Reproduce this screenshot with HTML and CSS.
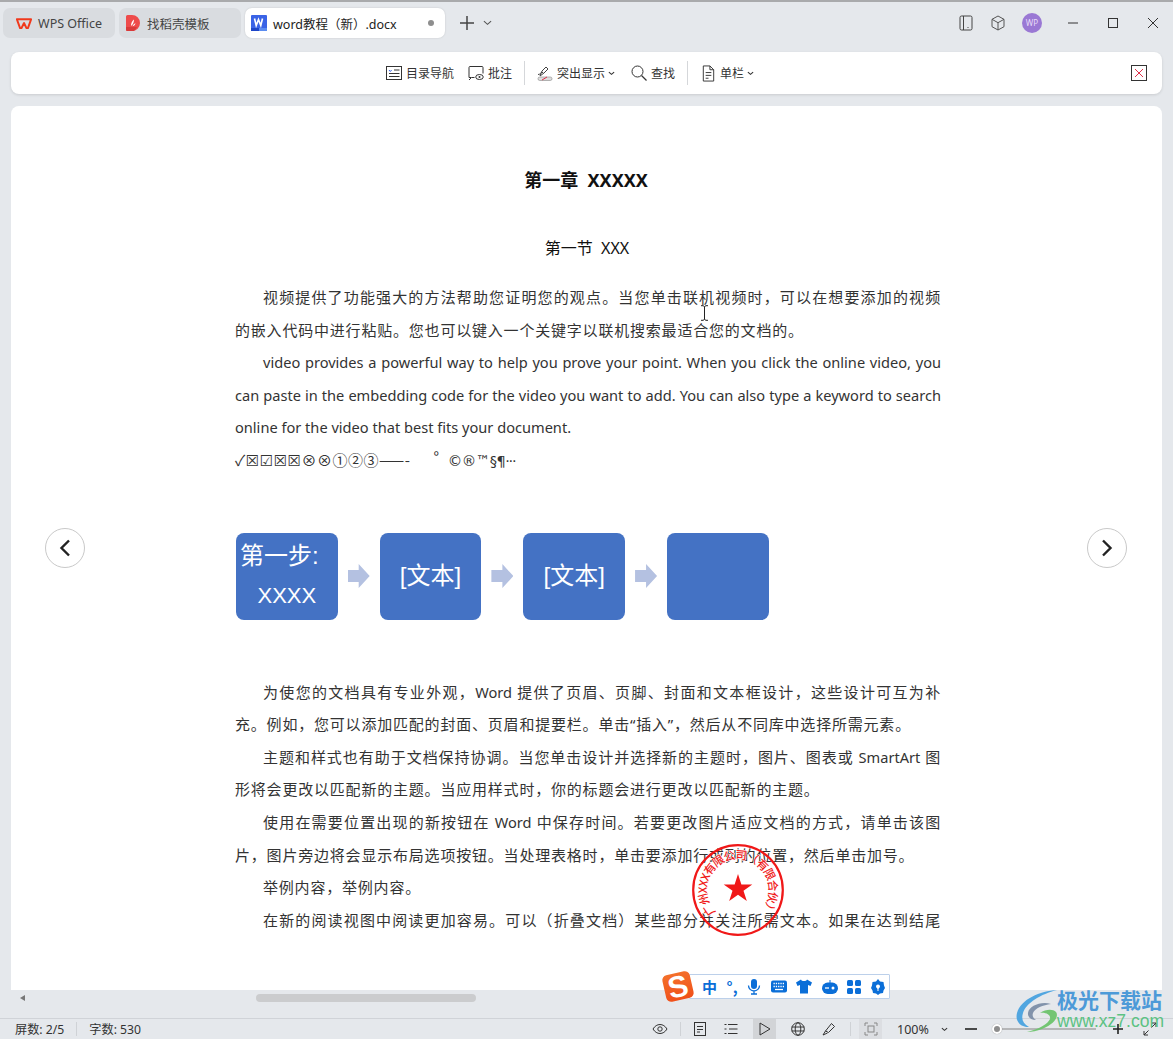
FILE: index.html
```html
<!DOCTYPE html>
<html lang="zh-CN">
<head>
    <meta charset="UTF-8">
    <meta name="viewport" content="width=device-width, initial-scale=1.0">
    <title>word教程（新）.docx</title>
    <link rel="stylesheet" href="styles.css">
</head>
<body>
<div class="app">
    <!-- tabs -->
    <header class="titlebar">
        <div class="tab">
            <svg class="tab-icon" viewBox="0 0 18 14" width="16" height="13"><path d="M1 2.200h16l-3.600 10h-1.600L9 6.500l-2.800 5.700H4.600z" fill="none" stroke="#f0391c" stroke-width="2.200" stroke-linejoin="round"/></svg>
            <span>WPS Office</span>
        </div>
        <div class="tab tab-docer">
            <svg class="tab-icon" viewBox="0 0 14 16" width="14" height="16"><path d="M0 1.500A1.500 1.500 0 0 1 1.500 0H6a8 8 0 0 1 0 16H1.500A1.500 1.500 0 0 1 0 14.500z" fill="#ee4b4b"/><path d="M0 12h11l-3 4H1.500A1.500 1.500 0 0 1 0 14.500z" fill="#d93a3a"/><path d="M5 11c0-3 1-5 3-6.500 0 2-.5 4.500-3 6.500zm1.500.3c.5-1.500 1.500-2.500 3-3-.3 1.500-1.300 2.600-3 3z" fill="#fff"/></svg>
            <span>找稻壳模板</span>
        </div>
        <div class="tab tab-active">
            <svg class="tab-icon" viewBox="0 0 16 16" width="16" height="16"><rect width="16" height="16" rx="1" fill="#3a63e6"/><rect y="13" width="16" height="3" fill="#5b8cf0"/><rect y="13" width="8" height="3" fill="#1d45c8"/><path d="M3.500 3.500l1.700 7 2.300-6 2.300 6 1.700-7" fill="none" stroke="#fff" stroke-width="1.600"/></svg>
            <span class="tab-name">word教程（新）.docx</span>
            <i class="tab-dot"></i>
        </div>
        <div class="tab-add">
            <svg viewBox="0 0 16 16" width="16" height="16"><path d="M8 1v14M1 8h14" stroke="#444" stroke-width="1.500"/></svg>
            <svg viewBox="0 0 10 6" width="9" height="6"><path d="M1 1l4 3.500L9 1" fill="none" stroke="#555" stroke-width="1.200"/></svg>
        </div>
        <div class="win-btns">
            <svg viewBox="0 0 16 16" width="16" height="16"><rect x="2" y="1" width="12" height="14" rx="1.500" fill="none" stroke="#444"/><path d="M5.500 1v14" stroke="#444"/><path d="M9.500 12.500h1" stroke="#444"/></svg>
            <svg class="win-cube" viewBox="0 0 16 16" width="16" height="16"><path d="M8 1l6 3.300v7.400L8 15l-6-3.300V4.300zM2 4.300l6 3.400 6-3.400M8 7.700V15" fill="none" stroke="#555"/></svg>
            <span class="avatar">WP</span>
            <svg class="win-min" viewBox="0 0 12 12" width="12" height="12"><path d="M1 6h10" stroke="#333"/></svg>
            <svg class="win-max" viewBox="0 0 12 12" width="12" height="12"><rect x="1.500" y="1.500" width="9" height="9" fill="none" stroke="#333"/></svg>
            <svg class="win-close" viewBox="0 0 12 12" width="12" height="12"><path d="M1 1l10 10M11 1L1 11" stroke="#333"/></svg>
        </div>
    </header>

    <!-- reading toolbar -->
    <nav class="toolbar">
        <div class="tool">
            <svg viewBox="0 0 16 14" width="16" height="14"><rect x=".5" y=".5" width="15" height="13" fill="none" stroke="#333"/><path d="M3 4l1.300 1.500L5.600 4" fill="none" stroke="#3a63e6"/><path d="M8 4h5.500M3 7.500h10.500M3 10.500h10.500" stroke="#333"/></svg>
            <span>目录导航</span>
        </div>
        <div class="tool tool-note">
            <svg viewBox="0 0 16 16" width="16" height="16"><path d="M3 12.500H1V2.500a1 1 0 0 1 1-1h12a1 1 0 0 1 1 1v6" fill="none" stroke="#333"/><path d="M1 15l2.500-2.500h3" fill="none" stroke="#333"/><ellipse cx="11.500" cy="12" rx="3.800" ry="2.500" fill="none" stroke="#333"/><circle cx="11.500" cy="12" r="1" fill="#333"/></svg>
            <span>批注</span>
        </div>
        <i class="tool-sep"></i>
        <div class="tool">
            <svg viewBox="0 0 16 16" width="16" height="16"><path d="M3 11l2-5 4-4 2 2-4 4zM1 9.500c2 .5 3-3 5-2" fill="none" stroke="#444"/><rect x="1" y="12" width="14" height="3.500" rx="1.700" fill="#ddd" stroke="#888" stroke-width=".6"/><path d="M5 15l5-3" stroke="#e0304a"/></svg>
            <span>突出显示</span>
            <svg class="caret" viewBox="0 0 8 5" width="7" height="5"><path d="M1 1l3 2.500L7 1" fill="none" stroke="#333" stroke-width="1.300"/></svg>
        </div>
        <div class="tool tool-find">
            <svg viewBox="0 0 16 16" width="16" height="16"><circle cx="6.500" cy="6.500" r="5.500" fill="none" stroke="#333"/><path d="M10.500 10.500L15.500 15.500" stroke="#333" stroke-width="1.200"/></svg>
            <span>查找</span>
        </div>
        <i class="tool-sep"></i>
        <div class="tool tool-cols">
            <svg viewBox="0 0 14 18" width="15" height="17"><path d="M1.500 1h7l4 4v12h-11z" fill="none" stroke="#333"/><path d="M8.500 1v4h4M4 8h6M4 11h6M4 14h3" fill="none" stroke="#333"/></svg>
            <span>单栏</span>
            <svg class="caret" viewBox="0 0 8 5" width="7" height="5"><path d="M1 1l3 2.500L7 1" fill="none" stroke="#333" stroke-width="1.300"/></svg>
        </div>
        <svg class="tool-close" viewBox="0 0 16 16" width="16" height="16"><rect x=".5" y=".5" width="15" height="15" fill="none" stroke="#333"/><path d="M4 4l8 8M12 4l-8 8" stroke="#e0304a"/></svg>
    </nav>

    <!-- document page -->
    <main class="page">
        <div class="doc">
            <h1>第一章&nbsp; XXXXX</h1>
            <h2>第一节&nbsp; XXX</h2>
            <p>视频提供了功能强大的方法帮助您证明您的观点。当您单击联机视频时，可以在想要添加的视频的嵌入代码中进行粘贴。您也可以键入一个关键字以联机搜索最适合您的文档的。</p>
            <p class="latin">video provides a powerful way to help you prove your point. When you click the online video, you can paste in the embedding code for the video you want to add. You can also type a keyword to search online for the video that best fits your document.</p>
            <p class="symbols">✓☒☑☒☒⊗⊗①②③——-&nbsp;&nbsp;&nbsp;&nbsp;&nbsp;&nbsp;<span class="deg">°</span><span class="sym-tail">&nbsp;&nbsp;©®™§¶<span class="sym-dots">···</span></span></p>

            <div class="flow">
                <div class="flow-box flow-first"><span class="flow-step">第一步:</span><span class="flow-x">XXXX</span></div>
                <i class="flow-arrow"></i>
                <div class="flow-box">[文本]</div>
                <i class="flow-arrow"></i>
                <div class="flow-box">[文本]</div>
                <i class="flow-arrow"></i>
                <div class="flow-box"></div>
            </div>

            <p>为使您的文档具有专业外观，<span class="en">Word</span> 提供了页眉、页脚、封面和文本框设计，这些设计可互为补充。例如，您可以添加匹配的封面、页眉和提要栏。单击“插入”，然后从不同库中选择所需元素。</p>
            <p>主题和样式也有助于文档保持协调。当您单击设计并选择新的主题时，图片、图表或 <span class="en">SmartArt</span> 图形将会更改以匹配新的主题。当应用样式时，你的标题会进行更改以匹配新的主题。</p>
            <p>使用在需要位置出现的新按钮在 <span class="en">Word</span> 中保存时间。若要更改图片适应文档的方式，请单击该图片，图片旁边将会显示布局选项按钮。当处理表格时，单击要添加行或列的位置，然后单击加号。</p>
            <p>举例内容，举例内容。</p>
            <p class="page-end">在新的阅读视图中阅读更加容易。可以（折叠文档）某些部分并关注所需文本。如果在达到结尾</p>
        </div>

        <button class="page-nav page-prev"><svg viewBox="0 0 12 18" width="12" height="18"><path d="M10 1.500L2.500 9l7.500 7.500" fill="none" stroke="#222" stroke-width="2.400"/></svg></button>
        <button class="page-nav page-next"><svg viewBox="0 0 12 18" width="12" height="18"><path d="M2 1.500L9.500 9 2 16.500" fill="none" stroke="#222" stroke-width="2.400"/></svg></button>

        <svg class="stamp" viewBox="0 0 96 96" width="96" height="96">
            <defs><path id="stamp-arc" d="M26 70A31 31 0 1 1 70 70"/></defs>
            <circle cx="48" cy="48" r="44.800" fill="none" stroke="#f01818" stroke-width="2.200"/>
            <text class="stamp-text"><textPath href="#stamp-arc" textLength="144" lengthAdjust="spacing">广州XXX有限公司（有限合伙）</textPath></text>
            <path d="M48 32L51.400 42.400H62.300L53.500 48.800 56.800 59.100 48 52.700 39.200 59.100 42.500 48.800 33.700 42.400H44.600z" fill="#f01818"/>
        </svg>
        <svg class="ibeam" viewBox="0 0 9 16" width="9" height="16"><path d="M1 .7h2.500L4.500 2l1-1.300H8M4.500 2v12M1 15.300h2.500l1-1.300 1 1.300H8" fill="none" stroke="#222"/></svg>
    </main>

    <!-- horizontal scroll -->
    <div class="hscroll">
        <i class="hscroll-arrow"></i>
        <i class="hscroll-thumb"></i>
    </div>

    <footer class="statusbar">
        <span>屏数: 2/5</span>
        <i class="status-sep"></i>
        <span>字数: 530</span>
        <div class="status-tools">
            <svg class="st-eye" viewBox="0 0 16 12" width="16" height="12"><path d="M1 6c3.500-6 10.500-6 14 0-3.500 6-10.500 6-14 0z" fill="none" stroke="#333"/><circle cx="8" cy="6" r="2.200" fill="none" stroke="#333"/></svg>
            <i class="status-sep st-sep1"></i>
            <svg class="st-page" viewBox="0 0 12 14" width="12" height="14"><rect x=".5" y=".5" width="11" height="13" fill="none" stroke="#333"/><path d="M3 4.500h6M3 7.500h6M3 10h3" stroke="#333"/></svg>
            <svg class="st-list" viewBox="0 0 14 12" width="14" height="12"><path d="M4 1.500h9.500M5 6h8.500M4 10.500h9.500M.5 1.500h2M.5 6h2M.5 10.500h2" stroke="#333"/></svg>
            <span class="st-active"><svg viewBox="0 0 12 14" width="12" height="14"><path d="M1 1l10 6-10 6z" fill="none" stroke="#333"/></svg></span>
            <svg class="st-globe" viewBox="0 0 14 14" width="14" height="14"><circle cx="7" cy="7" r="6.300" fill="none" stroke="#333"/><ellipse cx="7" cy="7" rx="2.800" ry="6.300" fill="none" stroke="#333"/><path d="M.7 5h12.600M.7 9h12.600" stroke="#333"/></svg>
            <svg class="st-brush" viewBox="0 0 14 14" width="14" height="14"><path d="M9.500 1.500l3 3-6 6-3-1.500zM3.500 9L1 13l4.500-2" fill="none" stroke="#333"/></svg>
            <i class="status-sep st-sep2"></i>
            <span class="st-fit"><svg viewBox="0 0 14 14" width="14" height="14"><path d="M1 4V1h3M10 1h3v3M13 10v3h-3M4 13H1v-3" fill="none" stroke="#888"/><rect x="4" y="4" width="6" height="6" fill="none" stroke="#888"/></svg></span>
            <span class="st-zoom">100%</span>
            <svg class="st-caret" viewBox="0 0 8 5" width="7" height="5"><path d="M1 1l3 2.500L7 1" fill="none" stroke="#333" stroke-width="1.200"/></svg>
            <svg class="st-minus" viewBox="0 0 12 4" width="12" height="4"><path d="M0 2h12" stroke="#222" stroke-width="1.600"/></svg>
            <div class="slider"><i class="slider-knob"></i></div>
            <svg class="st-plus" viewBox="0 0 10 10" width="10" height="10"><path d="M5 0v10M0 5h10" stroke="#222" stroke-width="1.600"/></svg>
            <svg class="st-full" viewBox="0 0 14 14" width="14" height="14"><path d="M9 1h4v4M13 1L8.500 5.500M5 13H1V9M1 13l4.500-4.500" fill="none" stroke="#333"/></svg>
        </div>
    </footer>

    <!-- input method bar -->
    <div class="ime">
        <div class="ime-logo"><span>S</span></div>
        <div class="ime-bar">
            <span class="ime-cn">中</span>
            <span class="ime-punc">°,</span>
            <svg viewBox="0 0 14 16" width="14" height="16"><rect x="4" y="0" width="6" height="10" rx="3" fill="#0a6ed8"/><path d="M1.500 6.500a5.500 5.500 0 0 0 11 0M7 12v3M4 15h6" fill="none" stroke="#0a6ed8" stroke-width="1.300"/></svg>
            <svg viewBox="0 0 16 12" width="16" height="13"><rect width="16" height="12" rx="2" fill="#0a6ed8"/><path d="M2.500 3h11M2.500 6h11" stroke="#fff" stroke-width="1.300" stroke-dasharray="1.300 1"/><path d="M4 9h8" stroke="#fff" stroke-width="1.300"/></svg>
            <svg viewBox="0 0 16 14" width="16" height="15"><path d="M5 0L0 3l1.500 3.500L4 5.500V14h8V5.500l2.500 1L16 3l-5-3c-.5 2-5.500 2-6 0z" fill="#0a6ed8"/></svg>
            <svg viewBox="0 0 16 14" width="16" height="14"><path d="M8 0v3" stroke="#0a6ed8"/><rect y="2.500" width="16" height="11.500" rx="5.700" fill="#0a6ed8"/><circle cx="11" cy="8" r="1.500" fill="#fff"/><path d="M3 8h4" stroke="#fff" stroke-width="1.300"/></svg>
            <svg viewBox="0 0 14 14" width="14" height="14"><g fill="#0a6ed8"><rect width="6" height="6" rx="1.500"/><rect x="8" width="6" height="6" rx="1.500"/><rect y="8" width="6" height="6" rx="1.500"/><rect x="8" y="8" width="6" height="6" rx="1.500"/></g></svg>
            <svg viewBox="0 0 14 16" width="14" height="16"><path d="M7 0l2 2.500 3.500.5.500 3.500L14 9l-1.500 2.500-.5 2.500-3 .5L7 16l-2-1.500-3-.5-.5-2.500L0 9l1-2.500L1.500 3 5 2.500z" fill="#0a6ed8"/><path d="M5 7.500a2 2 0 1 1 4 0c0 1-1 1.500-1.500 2.500v2h-1v-2C6 9 5 8.500 5 7.500z" fill="#fff"/></svg>
        </div>
    </div>

    <!-- site watermark -->
    <div class="mark">
        <svg class="mark-swirl" viewBox="0 0 48 44" width="48" height="44">
            <path d="M42 1C25 2 6 10 2 24c-2 8 3 14 12 14-6-3-8-8-6-14C11 14 26 5 42 1z" fill="#4aa3e0"/>
            <path d="M36 15c-10-3-22 2-23 9-.5 4 3 7 8 7-3-2-4-4-3-7 2-5 10-8 18-9z" fill="#7d8fa8"/>
            <path d="M25 24c6-4 13-4 16-1 3 4-1 12-14 17-5 2-10 3-15 3 12-3 21-8 23-13 1-4-4-7-10-6z" fill="#6dc46d"/>
        </svg>
        <div class="mark-text">
            <div class="mark-cn">极光下载站</div>
            <div class="mark-url">www.xz7.com</div>
        </div>
    </div>
</div>
</body>
</html>
```

FILE: styles.css
```css
* { box-sizing: border-box; }
html, body { margin: 0; height: 100%; }
body {
    font-family: "Noto Sans", "Noto Sans CJK SC", sans-serif;
    background: #e5e8ec;
    color: #333;
    overflow: hidden;
}
svg { display: block; flex: none; }
i { display: block; }

.app {
    position: relative;
    width: 1173px;
    height: 1039px;
    display: flex;
    flex-direction: column;
    padding-top: 2px;
    background: linear-gradient(#a9aaac 2px, #e5e8ec 2px);
    overflow: hidden;
}

/* title bar */
.titlebar {
    height: 50px;
    display: flex;
    align-items: flex-start;
    padding: 6px 0 0 3px;
    gap: 4px;
}
.tab {
    height: 30px;
    width: 112px;
    display: flex;
    align-items: center;
    gap: 6px;
    padding-left: 13px;
    border-radius: 7px;
    background: #d9dce0;
    font-size: 12.500px;
    color: #444;
}
.tab-docer { width: 122px; padding-left: 7px; gap: 7px; }
.tab-active {
    width: 200px;
    padding-left: 6px;
    background: #fff;
    color: #222;
    box-shadow: 0 0 2px rgba(0,0,0,0.15);
}
.tab-name { flex: 1; }
.tab-dot {
    width: 6px;
    height: 6px;
    border-radius: 50%;
    background: #8e8e8e;
    margin-right: 11px;
}
.tab-add {
    display: flex;
    align-items: center;
    gap: 8px;
    height: 30px;
    margin-left: 10px;
}
.win-btns {
    margin-left: auto;
    height: 30px;
    display: flex;
    align-items: center;
    padding-right: 14px;
}
.win-cube { margin-left: 16px; }
.avatar {
    width: 20px;
    height: 20px;
    margin-left: 16px;
    border-radius: 50%;
    background: #9a78d4;
    color: #e8dcf8;
    font-size: 8px;
    line-height: 20px;
    text-align: center;
}
.win-min { margin-left: 25px; }
.win-max { margin-left: 28px; }
.win-close { margin-left: 28px; }

/* toolbar */
.toolbar {
    height: 42px;
    margin: 0 11px;
    display: flex;
    align-items: center;
    padding-left: 375px;
    padding-right: 15px;
    background: #fff;
    border-radius: 8px;
    box-shadow: 0 1px 3px rgba(0,0,0,0.12);
    font-size: 12px;
    color: #333;
}
.tool { display: flex; align-items: center; gap: 4px; }
.tool-note { margin-left: 14px; }
.tool-find { margin-left: 16px; }
.tool-cols { margin-left: 1px; }
.caret { margin-left: -1px; }
.tool-sep {
    width: 1px;
    height: 24px;
    background: #d5d7da;
    margin: 0 12px;
}
.tool-close { margin-left: auto; }

/* page */
.page {
    position: relative;
    height: 884px;
    margin: 12px 11px 0;
    background: #fff;
    border-radius: 8px 8px 0 0;
    overflow: hidden;
}
.doc {
    width: 706px;
    margin-left: 224px;
    padding-top: 58px;
    font-size: 15px;
    line-height: 32.600px;
    color: #333;
}
.doc h1 {
    margin: 0 0 36px;
    padding-right: 4px;
    font-size: 18px;
    line-height: 32px;
    font-weight: 700;
    text-align: center;
    color: #111;
}
.doc h2 {
    margin: 0 0 17px;
    padding-right: 2px;
    font-size: 16px;
    line-height: 32px;
    font-weight: 400;
    text-align: center;
    color: #111;
}
.doc p {
    margin: 0;
    text-indent: 28px;
    text-align: justify;
    letter-spacing: 0.8px;
}
.doc p.latin { font-size: 14.600px; letter-spacing: 0; }
.doc p.page-end { text-align-last: justify; }
.en { font-size: 14.600px; letter-spacing: 0; }
.doc p.symbols {
    margin: -3px 0 3px;
    text-indent: 0;
    letter-spacing: 0.5px;
    font-family: "Noto Sans CJK SC", "DejaVu Sans", sans-serif;
    font-size: 15px;
    white-space: nowrap;
}
.deg { vertical-align: 3px; }
.sym-tail {
    font-family: "DejaVu Sans", sans-serif;
    font-size: 14.500px;
    letter-spacing: -0.5px;
}
.sym-dots { letter-spacing: -1.300px; }

/* flow diagram */
.flow {
    display: flex;
    align-items: center;
    margin: 55px 0 56px 1px;
}
.flow-box {
    width: 101.700px;
    height: 87px;
    display: flex;
    flex-direction: column;
    align-items: center;
    justify-content: center;
    border-radius: 8px;
    background: #4472c4;
    color: #fff;
    font-family: "Liberation Sans", "Noto Sans CJK SC", sans-serif;
    font-size: 24px;
    line-height: 40px;
}
.flow-step { align-self: flex-start; padding-left: 4px; white-space: nowrap; }
.flow-x { font-size: 22px; }
.flow-arrow {
    width: 22px;
    height: 24px;
    margin: 0 10px;
    background: #b4c1e1;
    clip-path: polygon(0 25%, 50% 25%, 50% 0, 100% 50%, 50% 100%, 50% 75%, 0 75%);
}

/* page arrows */
.page-nav {
    position: absolute;
    top: 422px;
    width: 40px;
    height: 40px;
    display: flex;
    align-items: center;
    justify-content: center;
    padding: 0;
    border: 1px solid #c9c9c9;
    border-radius: 50%;
    background: #fff;
}
.page-prev { left: 34px; }
.page-next { left: 1076px; }

.stamp {
    position: absolute;
    left: 679px;
    top: 736px;
}
.stamp-text {
    font-family: "Noto Sans CJK SC", sans-serif;
    font-size: 11.500px;
    font-weight: 500;
    fill: #f01818;
    stroke: #fff;
    stroke-width: 1px;
    paint-order: stroke;
}
.ibeam {
    position: absolute;
    left: 689px;
    top: 199px;
}

/* scroll strip */
.hscroll {
    height: 28px;
    position: relative;
}
.hscroll-arrow {
    position: absolute;
    left: 20px;
    top: 5px;
    width: 5px;
    height: 6px;
    background: #777;
    clip-path: polygon(100% 0, 100% 100%, 0 50%);
}
.hscroll-thumb {
    position: absolute;
    left: 256px;
    top: 4px;
    width: 220px;
    height: 8px;
    border-radius: 4px;
    background: #cbccce;
}

/* status bar */
.statusbar {
    height: 21px;
    display: flex;
    align-items: center;
    padding-left: 15px;
    border-top: 1px solid #d0d3d8;
    font-size: 12.200px;
    color: #333;
}
.status-sep {
    width: 1px;
    height: 14px;
    margin: 0 12px;
    background: #cfd2d6;
}
.status-tools {
    margin-left: auto;
    height: 100%;
    display: flex;
    align-items: center;
    padding-right: 16px;
}
.st-sep1 { margin: 0 0 0 12px; }
.st-page { margin-left: 13px; }
.st-list { margin-left: 18px; }
.st-active, .st-fit {
    width: 23px;
    height: 20px;
    display: flex;
    align-items: center;
    justify-content: center;
}
.st-active { margin-left: 15px; background: #d2d4d7; }
.st-globe { margin-left: 15px; }
.st-brush { margin-left: 17px; }
.st-sep2 { margin: 0 0 0 14px; }
.st-fit { margin-left: 8px; background: #dcdee2; }
.st-zoom { margin-left: 15px; font-size: 12.500px; width: 32px; white-space: nowrap; }
.st-caret { margin-left: 12px; }
.st-minus { margin-left: 17px; }
.slider {
    position: relative;
    width: 99px;
    height: 2px;
    margin-left: 20px;
    background: #b5b6b8;
}
.slider-knob {
    position: absolute;
    left: -5px;
    top: -4px;
    width: 10px;
    height: 10px;
    border-radius: 50%;
    background: #8d8d8d;
    border: 2.500px solid #fff;
    box-shadow: 0 0 1px rgba(0,0,0,0.4);
}
.st-plus { margin-left: 17px; }
.st-full { margin-left: 20px; }

/* input method bar */
.ime {
    position: absolute;
    left: 664px;
    top: 973px;
    display: flex;
    align-items: center;
}
.ime-logo {
    position: relative;
    z-index: 1;
    width: 28px;
    height: 27px;
    border-radius: 5px;
    background: linear-gradient(#f4702a, #f0501a);
    transform: rotate(-13deg);
    display: flex;
    align-items: center;
    justify-content: center;
    color: #fff;
    font-family: "Liberation Sans", sans-serif;
    font-size: 30px;
    font-weight: 700;
    line-height: 27px;
}
.ime-bar {
    width: 201px;
    height: 25px;
    margin-left: -3px;
    padding: 0 4px 0 12px;
    display: flex;
    align-items: center;
    justify-content: space-between;
    background: #fff;
    border: 1px solid #bcd0ea;
    border-radius: 1px;
}
.ime-cn, .ime-punc {
    color: #0a6ed8;
    font-family: "Noto Sans CJK SC", sans-serif;
    font-size: 15px;
    font-weight: 700;
}

/* watermark */
.mark {
    position: absolute;
    left: 1015px;
    top: 987px;
    display: flex;
    pointer-events: none;
}
.mark-swirl { margin-top: 2px; margin-right: -6px; opacity: 0.95; }
.mark-cn {
    color: #4d9ad8;
    font-family: "Noto Sans CJK SC", sans-serif;
    font-size: 21px;
    line-height: 25px;
    font-weight: 700;
    white-space: nowrap;
}
.mark-url {
    color: #5cc283;
    font-family: "Liberation Sans", sans-serif;
    font-size: 17.500px;
    line-height: 18px;
    white-space: nowrap;
}
```
